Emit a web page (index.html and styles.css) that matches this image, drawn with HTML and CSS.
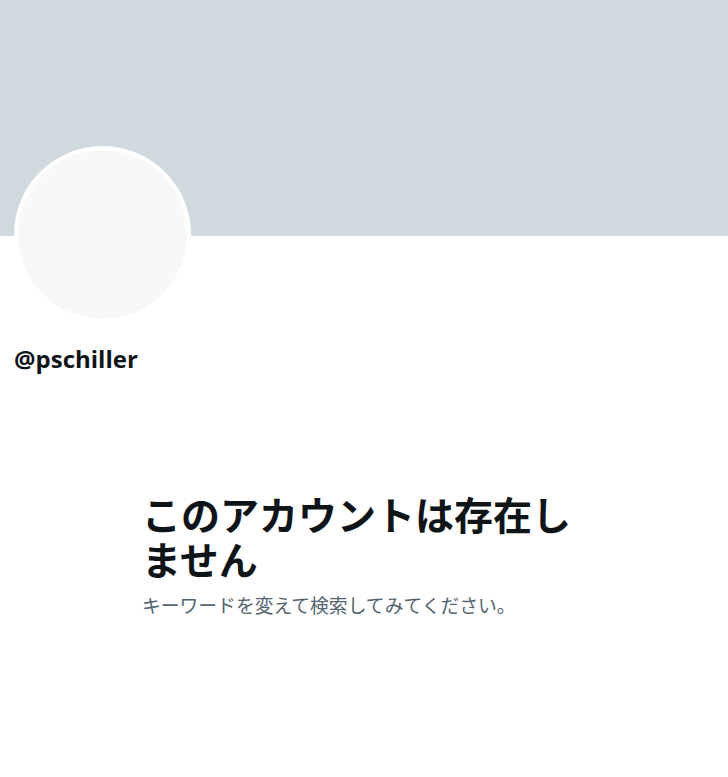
FILE: index.html
```html
<!DOCTYPE html>
<html lang="ja">
<head>
<meta charset="utf-8">
<link rel="stylesheet" href="styles.css">
</head>
<body>
<div class="page">
  <div class="banner"></div>
  <div class="profile">
    <div class="avatar"><div class="avatar-inner"></div></div>
    <div class="handle">@pschiller</div>
  </div>
  <div class="empty">
    <h1 class="empty-title">このアカウントは存在しません</h1>
    <p class="empty-text">キーワードを変えて検索してみてください。</p>
  </div>
</div>
</body>
</html>
```

FILE: styles.css
```css
html, body {
  margin: 0;
  padding: 0;
  background: #ffffff;
}
body {
  font-family: "Noto Sans", "Noto Sans CJK JP", sans-serif;
  color: #0f1419;
}
.page {
  width: 728px;
}
.banner {
  height: 236px;
  background: #cfd9de;
}
.profile {
  padding: 0 0 0 14px;
}
.avatar {
  margin-top: -90px;
  width: 177px;
  height: 177px;
  border-radius: 50%;
  background: #ffffff;
  padding: 4px;
  box-sizing: border-box;
}
.avatar-inner {
  width: 100%;
  height: 100%;
  border-radius: 50%;
  background: #f7f9f9;
}
.handle {
  margin-top: 20px;
  padding-left: 0;
  font-family: "Open Sans", "Noto Sans", sans-serif;
  font-weight: 700;
  font-size: 24px;
  line-height: 32px;
}
.empty {
  margin: 116px 0 0 142px;
  width: 450px;
}
.empty-title {
  margin: 0;
  font-family: "Noto Sans CJK JP", sans-serif;
  font-weight: 700;
  font-size: 39px;
  line-height: 45px;
}
.empty-text {
  margin: 12px 0 0;
  font-family: "Noto Sans CJK JP", sans-serif;
  font-size: 18.8px;
  line-height: 24px;
  color: #536471;
}
```
